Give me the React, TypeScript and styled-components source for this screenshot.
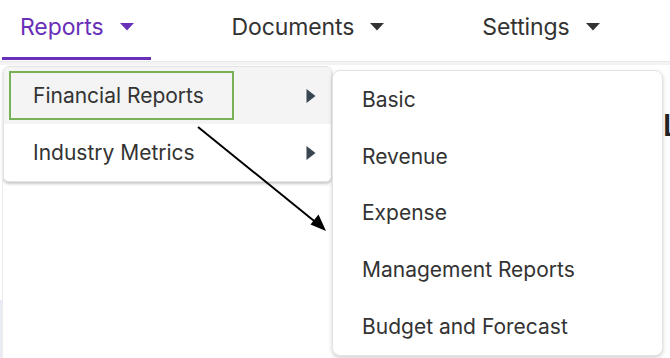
import styled, { createGlobalStyle } from 'styled-components';

const GlobalStyle = createGlobalStyle`
  html, body {
    margin: 0;
    padding: 0;
    background: #ffffff;
  }
  * {
    box-sizing: border-box;
  }
`;

const navItems = [
  { label: 'Reports', active: true },
  { label: 'Documents', active: false },
  { label: 'Settings', active: false },
];

const reportGroups = [
  { label: 'Financial Reports', highlighted: true },
  { label: 'Industry Metrics', highlighted: false },
];

const financialReports = [
  'Basic',
  'Revenue',
  'Expense',
  'Management Reports',
  'Budget and Forecast',
];

function CaretDown({ color }: { color: string }) {
  return (
    <svg width="14" height="8" viewBox="0 0 14 8">
      <path d="M0 0 L14 0 L7 7.5 Z" fill={color} />
    </svg>
  );
}

function CaretRight() {
  return (
    <svg width="10" height="14" viewBox="0 0 10 14">
      <path d="M0.5 0 L9.5 7 L0.5 14 Z" fill="#3a4552" />
    </svg>
  );
}

export default function App() {
  return (
    <>
      <GlobalStyle />
      <Screen>
        <NavBar>
          {navItems.map((item) => (
            <NavTab key={item.label} active={item.active}>
              <span>{item.label}</span>
              <CaretDown color={item.active ? '#6a2fb8' : '#333333'} />
            </NavTab>
          ))}
        </NavBar>
        <Page>
          <SideRail />
          <PageHeading>L</PageHeading>
        </Page>

        <Menu>
          {reportGroups.map((group) => (
            <MenuRow key={group.label} hovered={group.highlighted}>
              <RowLabel highlighted={group.highlighted}>{group.label}</RowLabel>
              <CaretRight />
            </MenuRow>
          ))}
        </Menu>

        <SubMenu>
          {financialReports.map((name) => (
            <SubMenuItem key={name}>{name}</SubMenuItem>
          ))}
        </SubMenu>

        <Annotation width="670" height="358" viewBox="0 0 670 358">
          <line x1="198" y1="127" x2="316" y2="222.5" stroke="#000" strokeWidth="2" />
          <path d="M326 231 L310.5 224.5 L318.5 214.5 Z" fill="#000" />
        </Annotation>
      </Screen>
    </>
  );
}

const Screen = styled.div`
  position: relative;
  width: 670px;
  height: 358px;
  overflow: hidden;
  background: #ffffff;
  font-family: Inter, 'Liberation Sans', Arial, sans-serif;
  color: #333333;
`;

const NavBar = styled.nav`
  display: flex;
  align-items: stretch;
  gap: 63px;
  height: 62px;
  padding-left: 2px;
  border-bottom: 1px solid #e9e9e9;
`;

const NavTab = styled.div<{ active: boolean }>`
  display: flex;
  align-items: center;
  gap: 16px;
  padding: 0 17px 4px 18px;
  font-size: 23px;
  letter-spacing: -0.1px;
  color: ${({ active }) => (active ? '#6a2fb8' : '#333333')};
  border-bottom: 3px solid ${({ active }) => (active ? '#6a2fb8' : 'transparent')};
  margin-bottom: 1px;
`;

const Page = styled.main`
  display: flex;
  justify-content: space-between;
  height: 296px;
  padding-top: 45px;
  border-top: 3px solid #f3f3f3;
`;

const SideRail = styled.div`
  width: 3px;
  height: 200px;
  margin-top: 70px;
  border-right: 1px solid #ececec;
  background: linear-gradient(#ffffff 0 60%, #e8ebf3 60% 100%);
`;

const PageHeading = styled.h2`
  margin: 0;
  width: 7px;
  overflow: hidden;
  font-size: 30px;
  line-height: 30px;
  font-weight: 600;
  color: #222222;
`;

const Menu = styled.div`
  position: absolute;
  top: 66px;
  left: 3px;
  width: 329px;
  background: #ffffff;
  border: 1px solid #e3e3e3;
  border-radius: 6px;
  box-shadow: 0 2px 3px rgba(0, 0, 0, 0.22);
  overflow: hidden;
`;

const MenuRow = styled.div<{ hovered: boolean }>`
  display: flex;
  align-items: center;
  justify-content: space-between;
  height: 57px;
  padding: 0 15px 0 5px;
  background: ${({ hovered }) => (hovered ? '#f4f4f4' : '#ffffff')};
`;

const RowLabel = styled.div<{ highlighted: boolean }>`
  display: flex;
  align-items: center;
  width: 225px;
  height: 49px;
  padding-left: 22px;
  font-size: 21px;
  border: 2px solid ${({ highlighted }) => (highlighted ? '#78b257' : 'transparent')};
`;

const SubMenu = styled.div`
  position: absolute;
  top: 70px;
  left: 332px;
  width: 331px;
  display: flex;
  flex-direction: column;
  background: #ffffff;
  border: 1px solid #e4e4e4;
  border-radius: 8px;
  box-shadow: 0 2px 4px rgba(0, 0, 0, 0.18);
`;

const SubMenuItem = styled.div`
  display: flex;
  align-items: center;
  height: 56.8px;
  padding-left: 29px;
  font-size: 21px;
`;

const Annotation = styled.svg`
  position: absolute;
  top: 0;
  left: 0;
  pointer-events: none;
`;
